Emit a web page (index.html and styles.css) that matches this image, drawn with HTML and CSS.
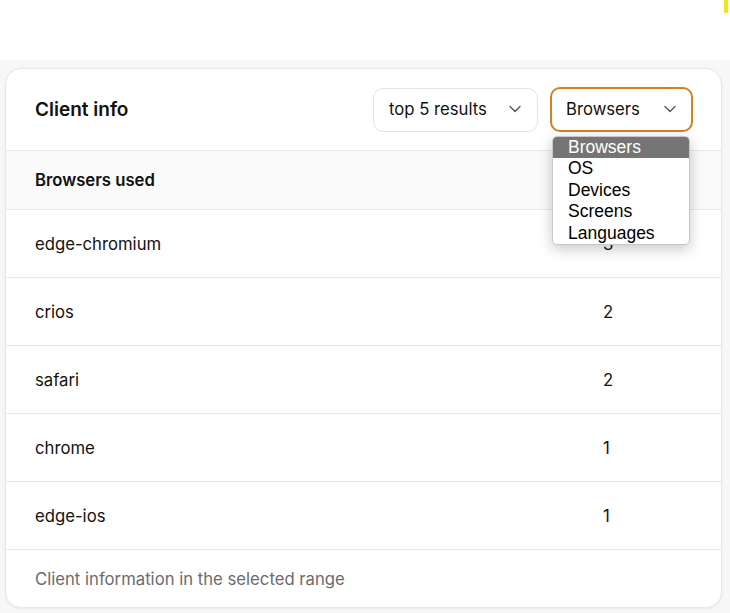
FILE: index.html
```html
<!DOCTYPE html>
<html lang="en">
<head>
<meta charset="utf-8">
<title>Client info</title>
<link rel="stylesheet" href="styles.css">
</head>
<body>
<div class="marker"></div>
<main class="page">
  <section class="card">
    <header class="card-head">
      <h2 class="title">Client info</h2>
      <div class="controls">
        <div class="select">
          <span>top 5 results</span>
          <svg class="chev" viewBox="0 0 12 8" width="12" height="8"><path d="M1 1.5 L6 6.5 L11 1.5" fill="none" stroke="#555" stroke-width="1.4" stroke-linecap="round" stroke-linejoin="round"/></svg>
        </div>
        <div class="select select-active">
          <span>Browsers</span>
          <svg class="chev" viewBox="0 0 12 8" width="12" height="8"><path d="M1 1.5 L6 6.5 L11 1.5" fill="none" stroke="#555" stroke-width="1.4" stroke-linecap="round" stroke-linejoin="round"/></svg>
          <ul class="menu">
            <li class="menu-item selected">Browsers</li>
            <li class="menu-item">OS</li>
            <li class="menu-item">Devices</li>
            <li class="menu-item">Screens</li>
            <li class="menu-item">Languages</li>
          </ul>
        </div>
      </div>
    </header>
    <div class="row row-head">
      <div class="cell">Browsers used</div>
      <div class="cell num"></div>
    </div>
    <div class="row"><div class="cell">edge-chromium</div><div class="cell num">3</div></div>
    <div class="row"><div class="cell">crios</div><div class="cell num">2</div></div>
    <div class="row"><div class="cell">safari</div><div class="cell num">2</div></div>
    <div class="row"><div class="cell">chrome</div><div class="cell num">1</div></div>
    <div class="row"><div class="cell">edge-ios</div><div class="cell num">1</div></div>
    <footer class="card-foot">Client information in the selected range</footer>
  </section>
</main>
</body>
</html>
```
FILE: styles.css
```css
* { box-sizing: border-box; }
html, body { margin: 0; padding: 0; }
body {
  background: #ffffff;
  font-family: Inter, "Noto Sans", sans-serif;
  color: #111111;
  width: 730px;
  height: 613px;
  overflow: hidden;
  position: relative;
}
.marker {
  position: absolute;
  top: 0;
  left: 724px;
  width: 4px;
  height: 13px;
  background: #f2e51c;
}
.page {
  margin-top: 60px;
  background: #f7f7f7;
  padding: 8px 8px 5px 5px;
  height: 553px;
}
.card {
  background: #ffffff;
  border: 1px solid #e6e6e6;
  border-radius: 16px;
  box-shadow: 0 1px 3px rgba(0,0,0,0.06);
  overflow: visible;
}
.card-head {
  height: 82px;
  display: flex;
  align-items: center;
  justify-content: space-between;
  padding: 0 28px 0 29px;
  border-bottom: 1px solid #e8e8e8;
}
.title {
  margin: 0;
  font-size: 19px;
  font-weight: 600;
  color: #111;
}
.controls {
  display: flex;
  gap: 12px;
  align-items: center;
}
.select {
  position: relative;
  height: 44px;
  width: 165px;
  border: 1px solid #e3e3e3;
  border-radius: 10px;
  display: flex;
  align-items: center;
  justify-content: space-between;
  padding: 0 16px 1px 15px;
  font-size: 16.7px;
  color: #111;
}
.select-active {
  width: 143px;
  height: 45px;
  border: 2px solid #d4811e;
  padding: 0 15px 1px 14px;
}
.chev { display: block; }
.menu {
  position: absolute;
  top: 47px;
  left: 0;
  width: 138px;
  margin: 0;
  padding: 0;
  list-style: none;
  background: #fff;
  border: 1px solid #c8c8c8;
  border-radius: 5px;
  box-shadow: 0 4px 14px rgba(0,0,0,0.22);
  overflow: hidden;
  font-family: "Liberation Sans", Arial, sans-serif;
  font-size: 17.5px;
  z-index: 5;
}
.menu-item {
  height: 21.4px;
  line-height: 21.4px;
  padding-left: 15px;
  color: #000;
}
.menu-item.selected {
  background: #757575;
  color: #fff;
}
.row {
  display: grid;
  grid-template-columns: 1fr 118px;
  height: 68px;
  align-items: center;
  padding-left: 29px;
  border-bottom: 1px solid #e8e8e8;
  font-size: 16.7px;
}
.row-head {
  height: 59px;
  background: #fafafa;
  font-weight: 600;
}
.num { text-align: left; }
.card-foot {
  height: 57px;
  display: flex;
  align-items: center;
  padding-left: 29px;
  font-size: 16.7px;
  color: #6b6b6b;
}
```
